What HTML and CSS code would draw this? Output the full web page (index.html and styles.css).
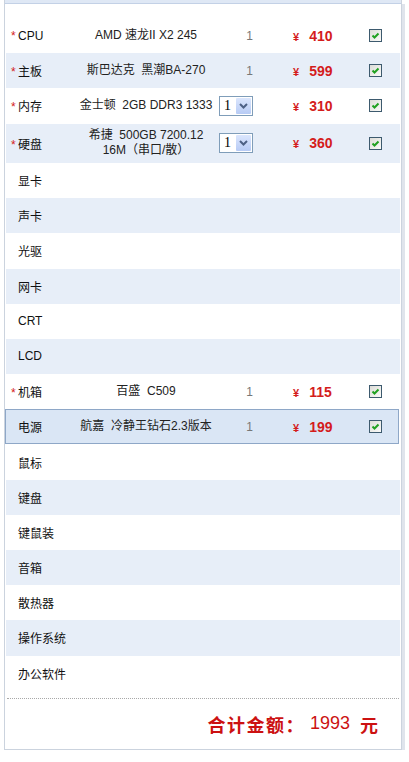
FILE: index.html
```html
<!DOCTYPE html>
<html lang="zh-CN">
<head>
<meta charset="utf-8">
<title>装机配置</title>
<link rel="stylesheet" href="styles.css">
</head>
<body>
<div class="panel">
  <div class="head"></div>
  <div class="list">
    <div class="row">
      <div class="name"><span class="star">*</span>CPU</div>
      <div class="prod">AMD 速龙II X2 245</div>
      <div class="qty">1</div>
      <div class="price"><span class="yen">¥</span>410</div>
      <div class="chk"><span class="cb"><svg viewBox="0 0 11 11" width="11" height="11"><path d="M2.5 5.5 L4.5 7.5 L8.5 3.5" fill="none" stroke="#21a121" stroke-width="2"/></svg></span></div>
    </div>
    <div class="row">
      <div class="name"><span class="star">*</span>主板</div>
      <div class="prod">斯巴达克&nbsp;&nbsp;黑潮BA-270</div>
      <div class="qty">1</div>
      <div class="price"><span class="yen">¥</span>599</div>
      <div class="chk"><span class="cb"><svg viewBox="0 0 11 11" width="11" height="11"><path d="M2.5 5.5 L4.5 7.5 L8.5 3.5" fill="none" stroke="#21a121" stroke-width="2"/></svg></span></div>
    </div>
    <div class="row">
      <div class="name"><span class="star">*</span>内存</div>
      <div class="prod">金士顿&nbsp;&nbsp;2GB DDR3 1333</div>
      <div class="qty"><span class="sel"><span class="sel-val">1</span><span class="sel-btn"><svg viewBox="0 0 9 6" width="9" height="6"><path d="M1 1 L4.5 4.5 L8 1" fill="none" stroke="#4d6185" stroke-width="2"/></svg></span></span></div>
      <div class="price"><span class="yen">¥</span>310</div>
      <div class="chk"><span class="cb"><svg viewBox="0 0 11 11" width="11" height="11"><path d="M2.5 5.5 L4.5 7.5 L8.5 3.5" fill="none" stroke="#21a121" stroke-width="2"/></svg></span></div>
    </div>
    <div class="row tall">
      <div class="name"><span class="star">*</span>硬盘</div>
      <div class="prod">希捷&nbsp;&nbsp;500GB 7200.12<br>16M（串口/散）</div>
      <div class="qty"><span class="sel"><span class="sel-val">1</span><span class="sel-btn"><svg viewBox="0 0 9 6" width="9" height="6"><path d="M1 1 L4.5 4.5 L8 1" fill="none" stroke="#4d6185" stroke-width="2"/></svg></span></span></div>
      <div class="price"><span class="yen">¥</span>360</div>
      <div class="chk"><span class="cb"><svg viewBox="0 0 11 11" width="11" height="11"><path d="M2.5 5.5 L4.5 7.5 L8.5 3.5" fill="none" stroke="#21a121" stroke-width="2"/></svg></span></div>
    </div>
    <div class="row"><div class="name plain">显卡</div></div>
    <div class="row"><div class="name plain">声卡</div></div>
    <div class="row"><div class="name plain">光驱</div></div>
    <div class="row"><div class="name plain">网卡</div></div>
    <div class="row"><div class="name plain">CRT</div></div>
    <div class="row"><div class="name plain">LCD</div></div>
    <div class="row">
      <div class="name"><span class="star">*</span>机箱</div>
      <div class="prod">百盛&nbsp;&nbsp;C509</div>
      <div class="qty">1</div>
      <div class="price"><span class="yen">¥</span>115</div>
      <div class="chk"><span class="cb"><svg viewBox="0 0 11 11" width="11" height="11"><path d="M2.5 5.5 L4.5 7.5 L8.5 3.5" fill="none" stroke="#21a121" stroke-width="2"/></svg></span></div>
    </div>
    <div class="row active">
      <div class="name plain">电源</div>
      <div class="prod">航嘉&nbsp;&nbsp;冷静王钻石2.3版本</div>
      <div class="qty">1</div>
      <div class="price"><span class="yen">¥</span>199</div>
      <div class="chk"><span class="cb"><svg viewBox="0 0 11 11" width="11" height="11"><path d="M2.5 5.5 L4.5 7.5 L8.5 3.5" fill="none" stroke="#21a121" stroke-width="2"/></svg></span></div>
    </div>
    <div class="row"><div class="name plain">鼠标</div></div>
    <div class="row"><div class="name plain">键盘</div></div>
    <div class="row"><div class="name plain">键鼠装</div></div>
    <div class="row"><div class="name plain">音箱</div></div>
    <div class="row"><div class="name plain">散热器</div></div>
    <div class="row"><div class="name plain">操作系统</div></div>
    <div class="row"><div class="name plain">办公软件</div></div>
  </div>
  <div class="total">
    <span class="t-label">合计金额：</span><span class="t-num">1993</span><span class="t-unit">元</span>
  </div>
</div>
</body>
</html>
```

FILE: styles.css
```css
html, body {
  margin: 0;
  padding: 0;
  background: #fff;
}

body {
  font-family: "Liberation Sans", "Noto Sans CJK SC", sans-serif;
  font-size: 12px;
  color: #222;
}

.panel {
  margin-left: 4px;
  width: 398px;
  box-sizing: border-box;
  border: 1px solid #cbd3de;
  border-top: 0;
  background: #fff;
  box-shadow: 3px 4px 0 #dfe4ec;
}

.head {
  height: 3px;
  background: #dfe8f5;
  border-bottom: 1px solid #c3d1e6;
}

.list {
  padding: 14px 1px 0 1px;
}

.row {
  display: flex;
  align-items: center;
  height: 35.2px;
  box-sizing: border-box;
  background: #fff;
}

.row:nth-child(even) {
  background: #e7eef8;
}

.row.tall {
  height: 39.4px;
}

.row.active {
  background: #dae6f5;
  border: 1px solid #8ea7c7;
  margin-left: -1px;
  margin-right: 1px;
}

.name {
  width: 64px;
  padding-left: 5px;
  box-sizing: border-box;
  white-space: nowrap;
  color: #111;
}

.name.plain {
  padding-left: 12px;
}

.star {
  display: inline-block;
  width: 7px;
  color: #d42020;
}

.prod {
  width: 152px;
  text-align: center;
  color: #222;
  line-height: 15px;
  white-space: nowrap;
}

.qty {
  width: 33px;
  display: flex;
  justify-content: flex-end;
  color: #777;
  padding-right: 2px;
  box-sizing: border-box;
}

.sel {
  display: flex;
  align-items: stretch;
  width: 34px;
  height: 20px;
  flex: none;
  box-sizing: border-box;
  border: 1px solid #7f9db9;
  background: #fff;
  padding: 1px;
}

.sel-val {
  flex: 1;
  font-family: "Liberation Serif", serif;
  font-size: 14px;
  line-height: 16px;
  color: #000;
  padding-left: 3px;
}

.sel-btn {
  width: 15px;
  display: flex;
  align-items: center;
  justify-content: center;
  background: linear-gradient(#dbe6fd, #b7cbf5);
  border-radius: 1px;
}

.price {
  width: 111px;
  padding-left: 38px;
  box-sizing: border-box;
  display: flex;
  align-items: baseline;
  font-weight: bold;
  font-size: 14px;
  color: #d41c1c;
  white-space: nowrap;
}

.yen {
  font-size: 11px;
  margin-right: 10px;
}

.chk {
  flex: 1;
  display: flex;
  padding-left: 3px;
}

.cb {
  width: 13px;
  height: 13px;
  box-sizing: border-box;
  border: 1px solid #3d5a6e;
  background: linear-gradient(135deg, #dcdcd7, #fbfbf9);
  display: flex;
  align-items: center;
  justify-content: center;
}

.total {
  margin: 7px 2px 0 2px;
  border-top: 1px dotted #a8a8a8;
  height: 50px;
  display: flex;
  align-items: center;
  justify-content: flex-end;
  padding-right: 21px;
  color: #cc1111;
  font-size: 18px;
}

.t-label {
  font-weight: bold;
  letter-spacing: 1.5px;
}

.t-num {
  margin-left: 5px;
}

.t-unit {
  font-weight: bold;
  margin-left: 10px;
}
```
